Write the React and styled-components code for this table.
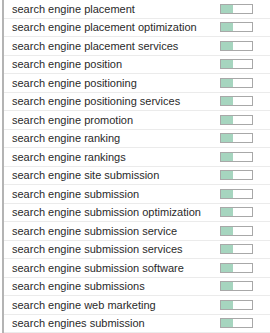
import React from "react"
import styled, { createGlobalStyle } from "styled-components"

const GlobalStyle = createGlobalStyle`
  html, body {
    margin: 0;
    padding: 0;
    background: #fff;
  }
`

const keywords = [
  { text: "search engine placement", share: 40 },
  { text: "search engine placement optimization", share: 40 },
  { text: "search engine placement services", share: 40 },
  { text: "search engine position", share: 40 },
  { text: "search engine positioning", share: 40 },
  { text: "search engine positioning services", share: 40 },
  { text: "search engine promotion", share: 40 },
  { text: "search engine ranking", share: 40 },
  { text: "search engine rankings", share: 40 },
  { text: "search engine site submission", share: 40 },
  { text: "search engine submission", share: 40 },
  { text: "search engine submission optimization", share: 40 },
  { text: "search engine submission service", share: 40 },
  { text: "search engine submission services", share: 40 },
  { text: "search engine submission software", share: 40 },
  { text: "search engine submissions", share: 40 },
  { text: "search engine web marketing", share: 40 },
  { text: "search engines submission", share: 40 },
]

const KeywordList = () => (
  <>
    <GlobalStyle />
    <Panel>
      {keywords.map(k => (
        <Row key={k.text}>
          <Term>{k.text}</Term>
          <Meter>
            <MeterFill style={{ width: `${k.share}%` }} />
          </Meter>
        </Row>
      ))}
    </Panel>
  </>
)

export default KeywordList

const Panel = styled.div`
  margin-left: 2px;
  border-left: 2px solid #b4b4b4;
  width: 266px;
  height: 333px;
  display: flex;
  flex-direction: column;
`

const Row = styled.div`
  height: 18.5px;
  box-sizing: border-box;
  border-bottom: 1px solid #ebebeb;
  display: flex;
  align-items: center;
  padding-left: 8px;
`

const Term = styled.span`
  flex: 1;
  font-family: "Liberation Sans", Arial, sans-serif;
  font-size: 11px;
  color: #2a2a2a;
  white-space: nowrap;
`

const Meter = styled.div`
  width: 33px;
  height: 10px;
  box-sizing: border-box;
  border: 1px solid #a8a8a8;
  background: #fff;
  margin-right: 17px;
  display: flex;
`

const MeterFill = styled.div`
  height: 100%;
  background: #a6d5bf;
`
